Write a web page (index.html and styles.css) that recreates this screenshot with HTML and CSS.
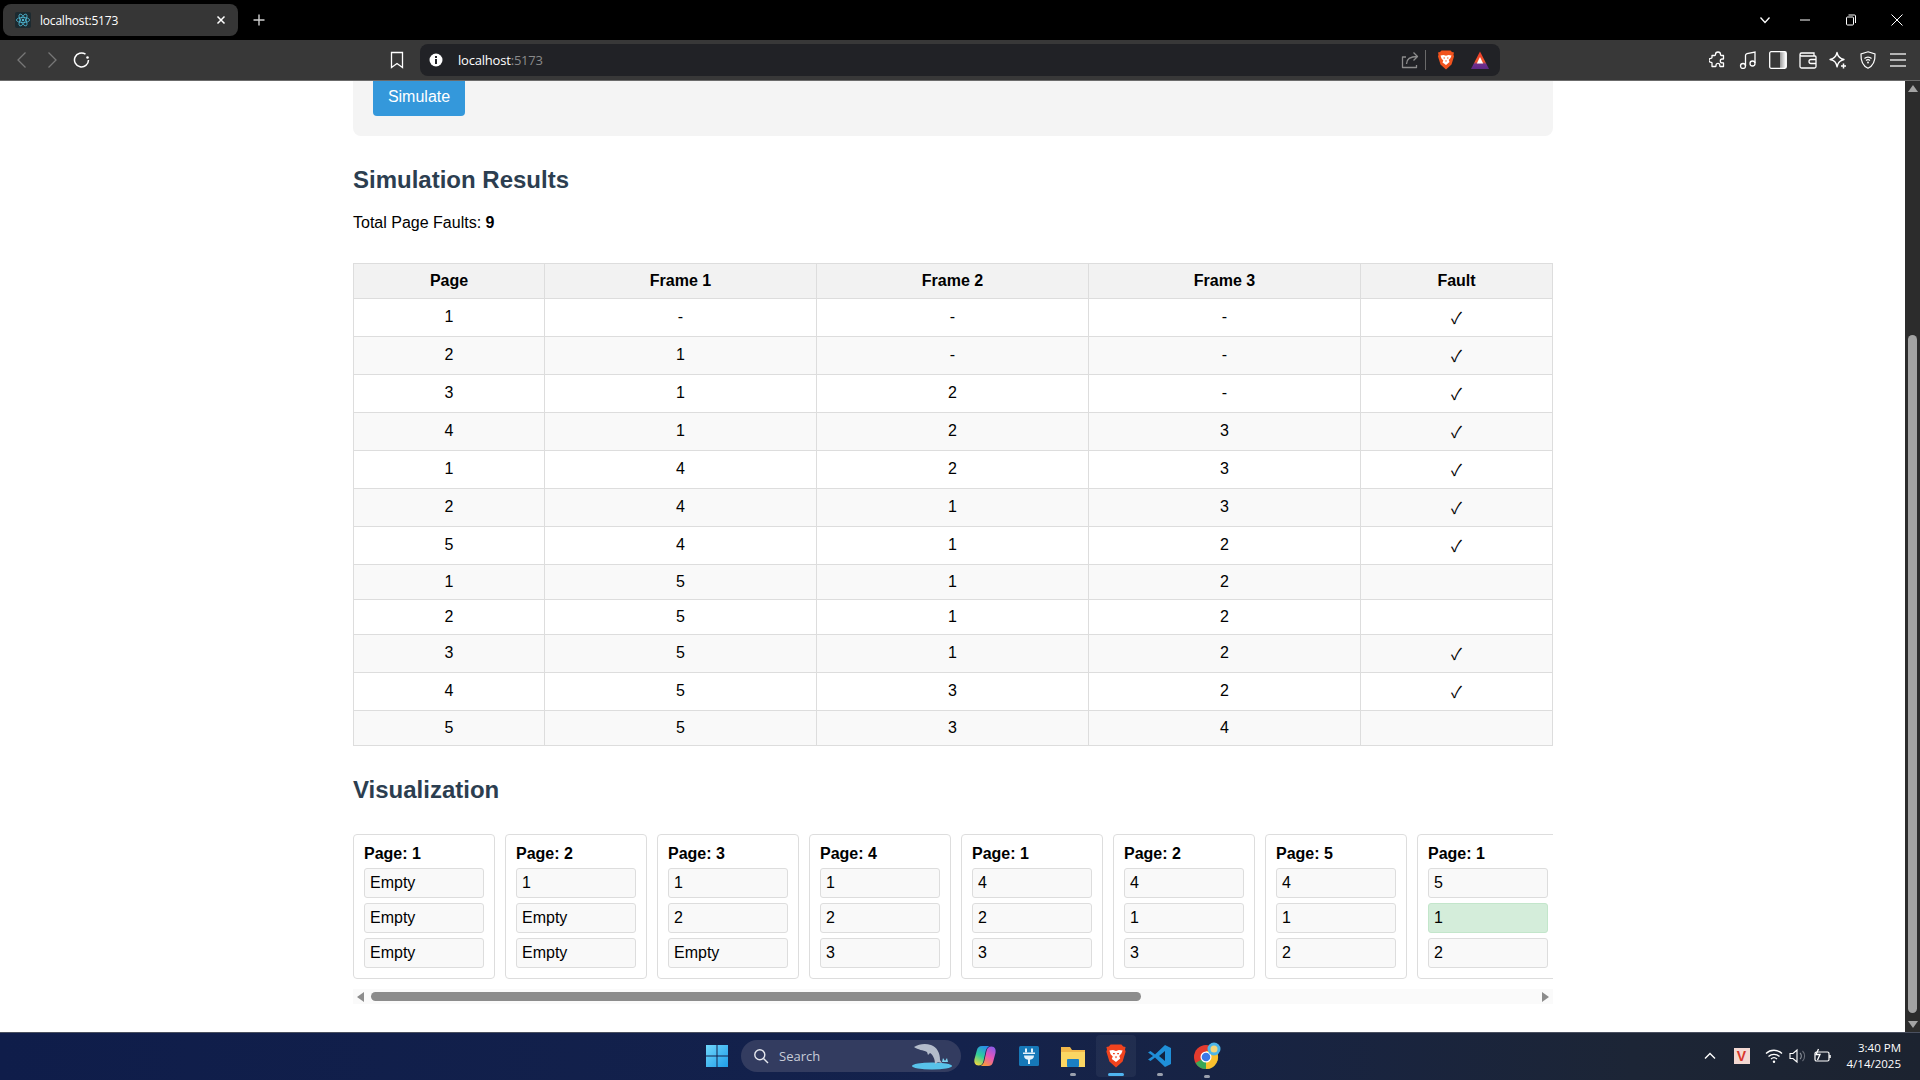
FILE: index.html
```html
<!DOCTYPE html>
<html lang="en">
<head>
    <meta charset="UTF-8">
    <meta name="viewport" content="width=device-width, initial-scale=1.0">
    <title>localhost:5173</title>
    <link rel="stylesheet" href="styles.css">
</head>
<body>

<div class="tabstrip">
    <div class="tab">
        <span class="favicon">
            <svg viewBox="0 0 16 16" width="16" height="16" fill="none" stroke="#4fb8d4" stroke-width="0.8">
                <ellipse cx="8" cy="8" rx="6.6" ry="2.6"/>
                <ellipse cx="8" cy="8" rx="6.6" ry="2.6" transform="rotate(60 8 8)"/>
                <ellipse cx="8" cy="8" rx="6.6" ry="2.6" transform="rotate(120 8 8)"/>
                <circle cx="8" cy="8" r="1.2" fill="#4fb8d4" stroke="none"/>
            </svg>
        </span>
        <span class="tab-title">localhost:5173</span>
        <svg class="tab-close" viewBox="0 0 10 10" width="10" height="10" stroke="#fff" stroke-width="1.5"><path d="M1.5 1.5l7 7M8.500 1.500l-7 7"/></svg>
    </div>
    <svg class="new-tab" viewBox="0 0 12 12" width="12" height="12" stroke="#d0d0d0" stroke-width="1.400"><path d="M6 .5v11M.5 6h11"/></svg>
    <div class="window-controls">
        <svg class="tab-list" viewBox="0 0 12 12" width="12" height="12" fill="none" stroke="#fff" stroke-width="1.300"><path d="M1.500 3.500L6 8.500l4.500-5"/></svg>
        <svg viewBox="0 0 12 12" width="12" height="12" fill="none" stroke="#fff" stroke-width="1"><path d="M1 6h10"/></svg>
        <svg viewBox="0 0 12 12" width="12" height="12" fill="none" stroke="#fff" stroke-width="1"><rect x="1.500" y="3" width="7" height="8" rx="1"/><path d="M3.500 1h6a1 1 0 0 1 1 1v7"/></svg>
        <svg viewBox="0 0 12 12" width="12" height="12" fill="none" stroke="#fff" stroke-width="1"><path d="M.5.500l11 11M11.500.500l-11 11"/></svg>
    </div>
</div>

<div class="toolbar">
    <div class="icon-group">
        <svg class="tool-icon" viewBox="0 0 18 18" fill="none" stroke="#777" stroke-width="1.300"><path d="M12.500 1.500L5 9l7.500 7.500"/></svg>
        <svg class="tool-icon" viewBox="0 0 18 18" fill="none" stroke="#777" stroke-width="1.300"><path d="M5.500 1.500L13 9l-7.500 7.500"/></svg>
        <svg class="tool-icon" viewBox="0 0 18 18" fill="none" stroke="#fff" stroke-width="1.500"><path d="M15.500 9a7 7 0 1 1-3-5.800"/><circle cx="14.500" cy="6.500" r="1.300" fill="#fff" stroke="none"/></svg>
    </div>
    <svg class="tool-icon bookmark" viewBox="0 0 18 18" fill="none" stroke="#fff" stroke-width="1.300"><path d="M3.500 1.500h11v15L9 12.500l-5.500 4z"/></svg>
    <div class="address-bar">
        <svg class="info" viewBox="0 0 14 14" width="14" height="14"><circle cx="7" cy="7" r="6.500" fill="#fff"/><rect x="6" y="6" width="2" height="5" fill="#212226"/><rect x="6" y="3" width="2" height="2" fill="#212226"/></svg>
        <span class="url">localhost<span class="url-port">:5173</span></span>
        <svg class="share" viewBox="0 0 18 18" width="18" height="18" fill="none" stroke="#8c8c8c" stroke-width="1.300" stroke-linejoin="round"><path d="M5 6H1.500v10.500h14V14"/><path d="M5.500 13c0-5 3.500-7.500 11-7.500M12.500 1.500l4 4-4 4"/></svg>
        <span class="divider"></span>
        <svg class="brave" viewBox="0 0 18 20" width="18" height="20"><path d="M4.500 0.500h9l1.500 1.500 2 .5-.5 2 .5 2-2.500 8-5.500 5-5.500-5-2.500-8 .5-2-.5-2 2-.5z" fill="#f1531e"/><path d="M3.500 5.500l3-.5 2.500.8 2.500-.8 3 .5-1 2.500-1.800 2 .8 2L9 15l-3.500-2.500.8-2-1.800-2z" fill="#fff"/><path d="M6.500 7.500h1.500v1H6.500zM10 7.500h1.500v1H10zM8 10.500h2l-1 1.500z" fill="#f1531e"/></svg>
        <svg class="rewards" viewBox="0 0 18 18" width="18" height="18"><defs><linearGradient id="rw" x1="0" y1="0" x2="0" y2="1"><stop offset="0" stop-color="#f0392b"/><stop offset="0.6" stop-color="#f0582b"/><stop offset="0.72" stop-color="#6e2f8f"/><stop offset="1" stop-color="#5f2a86"/></linearGradient></defs><path d="M9 .5L18 18H0z" fill="url(#rw)"/><path d="M9 6l3.200 6.500H5.800z" fill="#fff"/></svg>
    </div>
    <div class="icon-group tools-right">
        <svg class="tool-icon" viewBox="0 0 18 18" fill="none" stroke="#fff" stroke-width="1.300" stroke-linejoin="round"><path d="M6.500 3.500a2.500 2.500 0 0 1 5 0c0 .5.500 1 1 1h2v3.200c0 .5-.8.300-1.300.3a1.900 1.900 0 0 0 0 3.800c.5 0 1.300-.2 1.300.3v3.400h-3.400c-.5 0-.3-.8-.3-1.300a1.900 1.900 0 0 0-3.800 0c0 .5.200 1.300-.3 1.300H3v-3.400c0-.5-.5-.8-1-.8a2 2 0 0 1 0-4c.5 0 1-.3 1-.8V4.500h2.500c.5 0 1-.5 1-1z"/></svg>
        <svg class="tool-icon" viewBox="0 0 18 18" fill="none" stroke="#fff" stroke-width="1.300"><path d="M6.500 15V4.500c0-1 .5-1.500 1.500-1.800L16 1v11"/><circle cx="4" cy="15" r="2.500"/><circle cx="13.500" cy="12.500" r="2.500"/></svg>
        <svg class="tool-icon" viewBox="0 0 18 18"><defs><linearGradient id="side" x1="0" y1="0" x2="1" y2="0"><stop offset="0" stop-color="#9a9a9a"/><stop offset="1" stop-color="#fff"/></linearGradient></defs><rect x="11" y="1" width="6" height="16" fill="url(#side)"/><rect x=".7" y=".7" width="16.600" height="16.600" rx="1.500" fill="none" stroke="#fff" stroke-width="1.300"/></svg>
        <svg class="tool-icon" viewBox="0 0 18 18" fill="none" stroke="#fff" stroke-width="1.300"><path d="M1 3.500v12a1.500 1.500 0 0 0 1.500 1.500h13a1.500 1.500 0 0 0 1.500-1.500V6a1 1 0 0 0-1-1H2.500A1.500 1.500 0 0 1 1 3.500 1.500 1.500 0 0 1 2.500 2H15v3M17 8.500h-5a2 2 0 0 0 0 4h5"/></svg>
        <svg class="tool-icon" viewBox="0 0 18 18" fill="none" stroke="#fff" stroke-width="1.300" stroke-linejoin="round"><path d="M8 1.500c.8 4 2.500 6 7 7-3 .8-5 2-6 4.500l-1 3c-.8-5-2.500-6.600-7-7.500 4.500-1 6.200-3 7-7z"/><path d="M14.500 12.500v5M12 15h5" stroke-width="1.500"/></svg>
        <svg class="tool-icon" viewBox="0 0 18 18" fill="none" stroke="#fff" stroke-width="1.200"><path d="M9 .8l7 2.200c.3 6.500-1 11.500-7 14.200C3 14.500 1.700 9.500 2 3z"/><path d="M5.500 7.500a5 5 0 0 1 7 0M7 9.500a3 3 0 0 1 4 0"/><circle cx="9" cy="11.500" r=".9" fill="#fff" stroke="none"/></svg>
        <svg class="tool-icon" viewBox="0 0 18 18" stroke="#ddd" stroke-width="1.600"><path d="M1 3h16M1 9h16M1 15h16"/></svg>
    </div>
</div>

<div class="viewport">
    <div class="page">
        <div class="container">
            <div class="input-panel">
                <button class="simulate-btn">Simulate</button>
            </div>

            <h2 class="results-title">Simulation Results</h2>
            <p class="total-faults">Total Page Faults: <strong>9</strong></p>

            <table class="results-table">
                <colgroup>
                    <col class="col-page">
                    <col class="col-frame">
                    <col class="col-frame">
                    <col class="col-frame">
                    <col class="col-fault">
                </colgroup>
                <thead>
                    <tr><th>Page</th><th>Frame 1</th><th>Frame 2</th><th>Frame 3</th><th>Fault</th></tr>
                </thead>
                <tbody>
                    <tr class="is-fault"><td>1</td><td>-</td><td>-</td><td>-</td><td><span class="check">✓</span></td></tr>
                    <tr class="is-fault"><td>2</td><td>1</td><td>-</td><td>-</td><td><span class="check">✓</span></td></tr>
                    <tr class="is-fault"><td>3</td><td>1</td><td>2</td><td>-</td><td><span class="check">✓</span></td></tr>
                    <tr class="is-fault"><td>4</td><td>1</td><td>2</td><td>3</td><td><span class="check">✓</span></td></tr>
                    <tr class="is-fault"><td>1</td><td>4</td><td>2</td><td>3</td><td><span class="check">✓</span></td></tr>
                    <tr class="is-fault"><td>2</td><td>4</td><td>1</td><td>3</td><td><span class="check">✓</span></td></tr>
                    <tr class="is-fault"><td>5</td><td>4</td><td>1</td><td>2</td><td><span class="check">✓</span></td></tr>
                    <tr><td>1</td><td>5</td><td>1</td><td>2</td><td></td></tr>
                    <tr><td>2</td><td>5</td><td>1</td><td>2</td><td></td></tr>
                    <tr class="is-fault"><td>3</td><td>5</td><td>1</td><td>2</td><td><span class="check">✓</span></td></tr>
                    <tr class="is-fault"><td>4</td><td>5</td><td>3</td><td>2</td><td><span class="check">✓</span></td></tr>
                    <tr><td>5</td><td>5</td><td>3</td><td>4</td><td></td></tr>
                </tbody>
            </table>

            <h2 class="viz-title">Visualization</h2>
            <div class="viz-row">
                <div class="step"><div class="step-title">Page: 1</div><div class="frame">Empty</div><div class="frame">Empty</div><div class="frame">Empty</div></div>
                <div class="step"><div class="step-title">Page: 2</div><div class="frame">1</div><div class="frame">Empty</div><div class="frame">Empty</div></div>
                <div class="step"><div class="step-title">Page: 3</div><div class="frame">1</div><div class="frame">2</div><div class="frame">Empty</div></div>
                <div class="step"><div class="step-title">Page: 4</div><div class="frame">1</div><div class="frame">2</div><div class="frame">3</div></div>
                <div class="step"><div class="step-title">Page: 1</div><div class="frame">4</div><div class="frame">2</div><div class="frame">3</div></div>
                <div class="step"><div class="step-title">Page: 2</div><div class="frame">4</div><div class="frame">1</div><div class="frame">3</div></div>
                <div class="step"><div class="step-title">Page: 5</div><div class="frame">4</div><div class="frame">1</div><div class="frame">2</div></div>
                <div class="step"><div class="step-title">Page: 1</div><div class="frame">5</div><div class="frame hit">1</div><div class="frame">2</div></div>
            </div>
            <div class="hscroll">
                <span class="arrow-left"></span>
                <span class="hscroll-thumb"></span>
                <span class="arrow-right"></span>
            </div>
        </div>
    </div>
    <div class="vscroll">
        <span class="arrow-up"></span>
        <span class="vscroll-thumb"></span>
        <span class="arrow-down"></span>
    </div>
</div>

<div class="taskbar">
    <svg class="start" viewBox="0 0 24 24" width="24" height="24">
        <defs><linearGradient id="win" x1="0" y1="0" x2="1" y2="1"><stop offset="0" stop-color="#6fd6fb"/><stop offset="1" stop-color="#1f9ee8"/></linearGradient></defs>
        <path d="M1 1h10.500v10.500H1zM12.500 1H23v10.500H12.500zM1 12.500h10.500V23H1zM12.500 12.500H23V23H12.500z" fill="url(#win)"/>
    </svg>
    <div class="search">
        <svg viewBox="0 0 16 16" width="16" height="16" fill="none" stroke="#e6e8ee" stroke-width="1.400"><circle cx="6.800" cy="6.800" r="5"/><path d="M10.500 10.500l4.500 4.500"/></svg>
        <span class="search-label">Search</span>
        <svg class="dolphin" viewBox="0 0 44 30" width="44" height="30">
            <ellipse cx="23" cy="25" rx="20" ry="3.500" fill="#58c2ea"/>
            <path d="M5 6c5-3 11-4 17-2 6 2 9 8 9 15l2 3-4-1-3 2c0-5-2-9-5-11l-2 2-1-3C14 9 9 9 5 6z" fill="#b4bccb"/>
            <path d="M33 21l1-4 2 3 2-3 1 4z" fill="#7fd3ef"/>
        </svg>
    </div>
    <div class="task-icons">
        <svg viewBox="0 0 24 24" width="24" height="24">
            <defs><linearGradient id="cp1" x1="0.6" y1="0" x2="0.2" y2="1"><stop offset="0" stop-color="#2a8fe8"/><stop offset="0.5" stop-color="#2fcf9a"/><stop offset="1" stop-color="#f4d83c"/></linearGradient><linearGradient id="cp2" x1="0.8" y1="0" x2="0.3" y2="1"><stop offset="0" stop-color="#8a5be8"/><stop offset="0.5" stop-color="#e855b8"/><stop offset="1" stop-color="#f79a3a"/></linearGradient></defs>
            <path d="M9 2h7.500c-2 1-3 2.500-3.800 5L10.500 17c-.8 3-2 4.500-5 4.500C2 21.500.8 18.500 1.500 15L3.800 6.500C4.500 3.500 6 2 9 2z" fill="url(#cp1)"/>
            <path d="M15 22H7.500c2-1 3-2.500 3.800-5L13.500 7c.8-3 2-4.500 5-4.500 3.500 0 4.700 3 4 6.500l-2.300 8.500C19.500 20.500 18 22 15 22z" fill="url(#cp2)"/>
        </svg>
        <svg viewBox="0 0 24 24" width="24" height="24">
            <rect x="2" y="2" width="20" height="20" rx="1.500" fill="#1678b8"/>
            <path d="M9 4.500v4M15 4.500v4" stroke="#e4f2fb" stroke-width="2"/>
            <path d="M6 8.500h12V10H6zM7 11.500h10c0 2.500-1.500 4-4 4.300V20h-2v-4.200c-2.500-.3-4-1.800-4-4.300z" fill="#e4f2fb"/>
        </svg>
        <span class="task-item open">
            <svg viewBox="0 0 24 24" width="24" height="24">
                <path d="M0 3h9l2 3h13v16H0z" fill="#f2b84a"/>
                <rect y="8" width="24" height="15" fill="#fbd663"/>
                <rect x="6" y="15" width="12" height="8" rx="1" fill="#1a7fc4"/>
            </svg>
        </span>
        <span class="task-item active">
            <svg viewBox="0 0 18 20" width="22" height="24"><path d="M4.500 0.500h9l1.500 1.500 2 .5-.5 2 .5 2-2.500 8-5.500 5-5.500-5-2.500-8 .5-2-.5-2 2-.5z" fill="#f1431e"/><path d="M3.500 5.500l3-.5 2.500.8 2.500-.8 3 .5-1 2.500-1.800 2 .8 2L9 15l-3.500-2.500.8-2-1.800-2z" fill="#fff"/><path d="M6.500 7.500h1.500v1H6.500zM10 7.500h1.500v1H10zM8 10.500h2l-1 1.500z" fill="#f1431e"/></svg>
        </span>
        <span class="task-item open nudge">
            <svg viewBox="0 0 24 24" width="24" height="24">
                <path d="M17 1l6 3v16l-6 3-10-9.500L2.500 17 0 15.500 5 12 0 8.500 2.500 7 7 10.500z" fill="#1f8fd8"/>
                <path d="M17 7l-6 5 6 5z" fill="#12233f"/>
            </svg>
        </span>
        <span class="task-item open nudge">
            <svg viewBox="0 0 28 28" width="28" height="28">
                <circle cx="13" cy="15" r="12" fill="#e33b2e"/>
                <path d="M13 15L2.600 21a12 12 0 0 0 10.400 6 12 12 0 0 0 10.400-18z" fill="#3aa757"/>
                <path d="M13 9h10.400A12 12 0 0 1 13 27z" fill="#fbc02d"/>
                <circle cx="13" cy="15" r="5.500" fill="#fff"/>
                <circle cx="13" cy="15" r="4.300" fill="#3b78e7"/>
                <circle cx="21" cy="7" r="6.500" fill="#4db6e8"/>
                <circle cx="21" cy="7" r="3.500" fill="#f4d67a"/>
            </svg>
        </span>
    </div>
    <div class="tray">
        <svg viewBox="0 0 12 12" width="12" height="12" fill="none" stroke="#fff" stroke-width="1.400"><path d="M1 8.500L6 3.500l5 5"/></svg>
        <span class="tray-badge">V</span>
        <svg viewBox="0 0 18 16" width="18" height="16" fill="none" stroke="#fff" stroke-width="1.300"><path d="M1 5.500a11.500 11.500 0 0 1 16 0M3.500 8.500a8 8 0 0 1 11 0M6 11a4.500 4.500 0 0 1 6 0"/><circle cx="9" cy="13.800" r="1.200" fill="#fff" stroke="none"/></svg>
        <svg viewBox="0 0 18 16" width="18" height="16" fill="none" stroke="#fff" stroke-width="1.100"><path d="M1 5.500h3L8 2v12l-4-3.500H1z"/><path d="M11 5a4 4 0 0 1 0 6" stroke="#8a8f99"/><path d="M13.500 3a7 7 0 0 1 0 10" stroke="#6a6f7a"/></svg>
        <svg viewBox="0 0 18 16" width="18" height="16" fill="none" stroke="#fff" stroke-width="1.200"><rect x="2" y="4" width="14" height="9" rx="1.500"/><path d="M17 7v3" stroke-width="1.500"/><path d="M5.500 1L3 6.500h4L4.500 12" stroke-width="1.300"/></svg>
        <div class="clock">
            <span>3:40 PM</span>
            <span>4/14/2025</span>
        </div>
    </div>
</div>

</body>
</html>
```

FILE: styles.css
```css
html, body {
    margin: 0;
    height: 100%;
    overflow: hidden;
}

body {
    display: flex;
    flex-direction: column;
    font-family: "Liberation Sans", Arial, sans-serif;
    font-size: 16px;
    color: #000;
    background-color: #fff;
}

svg {
    display: block;
    flex: none;
}

/* Browser chrome */
.tabstrip {
    display: flex;
    align-items: flex-start;
    height: 40px;
    flex: none;
    background-color: #000;
}

.tab {
    display: flex;
    align-items: center;
    width: 235px;
    height: 32px;
    margin: 4px 0 0 3px;
    padding: 0 12px;
    box-sizing: border-box;
    background-color: #363636;
    border-radius: 8px;
    color: #fff;
}

.favicon {
    width: 16px;
    height: 16px;
    background-color: #1c2a30;
    border-radius: 2px;
}

.tab-title {
    margin-left: 9px;
    font-family: "Open Sans", sans-serif;
    font-size: 12px;
    letter-spacing: -0.2px;
    flex: 1;
}

.new-tab {
    margin: 14px 0 0 15px;
}

.window-controls {
    display: flex;
    gap: 34px;
    margin: 14px 17px 0 auto;
}

.tab-list {
    margin-right: -6px;
}

.toolbar {
    display: flex;
    align-items: center;
    height: 40px;
    flex: none;
    padding: 0 13px;
    background-color: #383838;
    border-bottom: 1px solid #6b6b6b;
}

.icon-group {
    display: flex;
    gap: 12px;
}

.tool-icon {
    width: 18px;
    height: 18px;
}

.bookmark {
    margin-left: 297px;
}

.address-bar {
    display: flex;
    align-items: center;
    width: 1080px;
    height: 32px;
    margin-left: 14px;
    padding: 0 11px 0 9px;
    box-sizing: border-box;
    background-color: #212226;
    border-radius: 8px;
}

.url {
    margin-left: 15px;
    font-family: "Open Sans", sans-serif;
    font-size: 13px;
    letter-spacing: -0.2px;
    color: #fff;
    flex: 1;
}

.url-port {
    color: #8a8a8a;
}

.divider {
    width: 1px;
    height: 20px;
    margin: 0 11px 0 6px;
    background-color: #6a6a6a;
}

.rewards {
    margin-left: 16px;
}

.tools-right {
    margin-left: auto;
}

/* Page area */
.viewport {
    display: flex;
    flex: 1;
    min-height: 0;
}

.page {
    flex: 1;
    min-width: 0;
    padding-left: 1px;
    overflow: hidden;
}

.container {
    width: 1200px;
    margin: 0 auto;
}

.input-panel {
    padding: 0 20px 20px;
    background-color: #f4f4f4;
    border-radius: 0 0 8px 8px;
}

.simulate-btn {
    display: block;
    width: 92px;
    height: 35px;
    padding: 0 0 4px;
    border: none;
    border-radius: 0 0 4px 4px;
    background-color: #3498db;
    color: #fff;
    font-family: inherit;
    font-size: 16px;
}

.results-title,
.viz-title {
    margin: 0;
    font-size: 24px;
    line-height: 28px;
    color: #2c3e50;
}

.results-title {
    margin-top: 30px;
}

.total-faults {
    margin: 20px 0 31px;
    line-height: 18px;
}

.results-table {
    width: 1199px;
    table-layout: fixed;
    border-collapse: collapse;
}

.col-page {
    width: 191px;
}

.col-frame {
    width: 272px;
}

.col-fault {
    width: 192px;
}

.results-table th,
.results-table td {
    padding: 0 12px;
    border: 1px solid #ddd;
    text-align: center;
    line-height: 18px;
}

.results-table th {
    height: 34px;
    background-color: #f2f2f2;
}

.results-table td {
    height: 34px;
}

.results-table .is-fault td {
    height: 35px;
    padding-bottom: 2px;
}

/* the check cell sets the height of its row */
.results-table .is-fault td:last-child {
    height: 37px;
    padding-bottom: 0;
}

.results-table tbody tr:nth-child(even) {
    background-color: #f9f9f9;
}

.check {
    font-family: "Noto Sans CJK JP", "DejaVu Sans", sans-serif;
    font-size: 16px;
}

.viz-title {
    margin-top: 30px;
}

.viz-row {
    display: flex;
    gap: 10px;
    margin-top: 30px;
    overflow: hidden;
}

.step {
    flex: none;
    width: 142px;
    padding: 10px;
    box-sizing: border-box;
    border: 1px solid #ddd;
    border-radius: 4px;
}

.step-title {
    margin-bottom: 5px;
    font-weight: bold;
    line-height: 18px;
}

.frame {
    height: 30px;
    padding: 0 5px;
    box-sizing: border-box;
    border: 1px solid #ddd;
    border-radius: 3px;
    background-color: #f9f9f9;
    line-height: 28px;
}

.frame + .frame {
    margin-top: 5px;
}

.frame.hit {
    background-color: #d4edda;
    border-color: #c3e6cb;
}

/* Scrollbars */
.hscroll {
    display: flex;
    align-items: center;
    height: 15px;
    margin-top: 10px;
    padding: 0 4px;
    background-color: #fafafa;
}

.arrow-left {
    border-style: solid;
    border-width: 5px 7px 5px 0;
    border-color: transparent #8c8c8c transparent transparent;
}

.hscroll-thumb {
    width: 770px;
    height: 9px;
    margin-left: 7px;
    border-radius: 5px;
    background-color: #8c8c8c;
}

.arrow-right {
    margin-left: auto;
    border-style: solid;
    border-width: 5px 0 5px 7px;
    border-color: transparent transparent transparent #8c8c8c;
}

.vscroll {
    display: flex;
    flex-direction: column;
    align-items: center;
    width: 15px;
    flex: none;
    background-color: #2c2c2c;
}

.arrow-up {
    margin-top: 4px;
    border-style: solid;
    border-width: 0 5px 7px;
    border-color: transparent transparent #a3a3a3;
}

.vscroll-thumb {
    width: 9px;
    height: 678px;
    margin-top: 243px;
    border-radius: 5px;
    background-color: #a3a3a3;
}

.arrow-down {
    margin-top: auto;
    margin-bottom: 4px;
    border-style: solid;
    border-width: 7px 5px 0;
    border-color: #a3a3a3 transparent transparent;
}

/* Windows taskbar */
.taskbar {
    display: flex;
    align-items: center;
    height: 48px;
    flex: none;
    padding: 0 19px 2px 705px;
    box-sizing: border-box;
    border-top: 1px solid #4a5060;
    background: linear-gradient(90deg, #0f1d4a 0%, #14224c 50%, #1c2536 85%, #1c2330 100%);
}

.search {
    display: flex;
    align-items: center;
    width: 220px;
    height: 32px;
    margin-left: 12px;
    padding: 0 8px 0 12px;
    box-sizing: border-box;
    border-radius: 16px;
    background-color: #333c60;
}

.search-label {
    margin-left: 10px;
    font-family: "Open Sans", sans-serif;
    font-size: 13px;
    color: #c8ccd8;
    flex: 1;
}

.task-icons {
    display: flex;
    align-items: center;
    gap: 20px;
    margin-left: 12px;
}

.task-item {
    position: relative;
    display: block;
}

.task-item.nudge {
    margin-left: 1px;
}

.task-item.open::after,
.task-item.active::after {
    content: "";
    position: absolute;
    left: 50%;
    bottom: -8px;
    width: 6px;
    height: 3px;
    margin-left: -3px;
    border-radius: 2px;
    background-color: #9aa0ad;
}

.task-item.active::before {
    content: "";
    position: absolute;
    inset: -9px;
    border-radius: 4px;
    background-color: rgba(255, 255, 255, 0.05);
}

.task-item.active svg {
    position: relative;
}

.task-item.active::after {
    width: 16px;
    margin-left: -8px;
    background-color: #4fb4f0;
}

.tray {
    display: flex;
    align-items: center;
    gap: 6px;
    margin-left: auto;
    color: #fff;
}

.tray-badge {
    display: flex;
    align-items: center;
    justify-content: center;
    width: 16px;
    height: 16px;
    margin: 0 9px 0 12px;
    background-color: #f3d8d2;
    color: #d9362b;
    font-weight: bold;
    font-size: 14px;
}

.clock {
    display: flex;
    flex-direction: column;
    align-items: flex-end;
    gap: 2px;
    margin-left: 10px;
    font-family: "Open Sans", sans-serif;
    font-size: 11.5px;
    line-height: 14px;
}
```
